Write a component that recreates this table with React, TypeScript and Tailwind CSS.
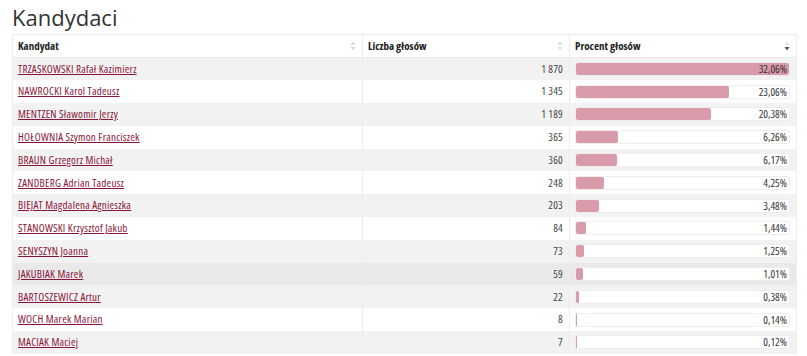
const rows = [
  { name: 'TRZASKOWSKI Rafał Kazimierz', votes: '1 870', pct: 32.06 },
  { name: 'NAWROCKI Karol Tadeusz', votes: '1 345', pct: 23.06 },
  { name: 'MENTZEN Sławomir Jerzy', votes: '1 189', pct: 20.38 },
  { name: 'HOŁOWNIA Szymon Franciszek', votes: '365', pct: 6.26 },
  { name: 'BRAUN Grzegorz Michał', votes: '360', pct: 6.17 },
  { name: 'ZANDBERG Adrian Tadeusz', votes: '248', pct: 4.25 },
  { name: 'BIEJAT Magdalena Agnieszka', votes: '203', pct: 3.48 },
  { name: 'STANOWSKI Krzysztof Jakub', votes: '84', pct: 1.44 },
  { name: 'SENYSZYN Joanna', votes: '73', pct: 1.25 },
  { name: 'JAKUBIAK Marek', votes: '59', pct: 1.01 },
  { name: 'BARTOSZEWICZ Artur', votes: '22', pct: 0.38 },
  { name: 'WOCH Marek Marian', votes: '8', pct: 0.14 },
  { name: 'MACIAK Maciej', votes: '7', pct: 0.12 },
];

const maxPct = 32.06;

function SortIcon({ active }: { active?: boolean }) {
  return (
    <svg width="6" height="10" viewBox="0 0 6 10" className="shrink-0">
      <path d="M3 0.5 L5.5 4 H0.5 Z" fill={active ? '#e0e0e0' : '#dcdcdc'} />
      <path d="M3 9.5 L5.5 6 H0.5 Z" fill={active ? '#555' : '#dcdcdc'} />
    </svg>
  );
}

export default function App() {
  return (
    <div className="w-[807px] h-[356px] overflow-hidden bg-white text-[#333] font-['Open_Sans',sans-serif]">
      <h2 className="px-3 pt-[4px] h-[34px] text-[22px] leading-[26px] text-[#333]">Kandydaci</h2>
      <table className="ml-3 w-[784px] border-collapse text-[11px] table-fixed font-stretch-condensed">
        <colgroup>
          <col className="w-[350px]" />
          <col className="w-[207px]" />
          <col className="w-[227px]" />
        </colgroup>
        <thead>
          <tr className="h-[23px] bg-white">
            {['Kandydat', 'Liczba głosów', 'Procent głosów'].map((h, i) => (
              <th key={h} className="border border-[#ececec] pl-[5px] pr-[6px] text-left font-bold text-[#222]">
                <div className="flex items-center justify-between">
                  <span>{h}</span>
                  <SortIcon active={i === 2} />
                </div>
              </th>
            ))}
          </tr>
        </thead>
        <tbody>
          {rows.map((r, idx) => {
            const bg = idx === 9 ? 'bg-[#e9e9e9]' : idx % 2 === 0 ? 'bg-[#f2f2f2]' : 'bg-white';
            return (
              <tr key={r.name} className={`h-[22.8px] ${bg}`}>
                <td className="border-x border-[#ececec] pl-[5px] pr-[6px] py-0">
                  <a href="#" className="text-[#8a1538] underline underline-offset-1 tracking-[0.25px]">{r.name}</a>
                </td>
                <td className="border-x border-[#ececec] px-[6px] py-0 text-right text-[#444] tracking-[0.2px]">{r.votes}</td>
                <td className="border-x border-[#ececec] pl-[5px] pr-[6px] py-0">
                  <div className="relative h-[14px] rounded-[2px] border border-[#eeeeee] bg-white">
                    <div
                      className="absolute left-0 top-0 bottom-0 rounded-[2px] bg-[#d99aa9]"
                      style={{ width: `${Math.max((r.pct / maxPct) * 100, 0.6)}%` }}
                    />
                    <span className="relative block pr-[2px] text-right leading-[12px] text-[#333]">
                      {r.pct.toFixed(2).replace('.', ',')}%
                    </span>
                  </div>
                </td>
              </tr>
            );
          })}
        </tbody>
      </table>
    </div>
  );
}
